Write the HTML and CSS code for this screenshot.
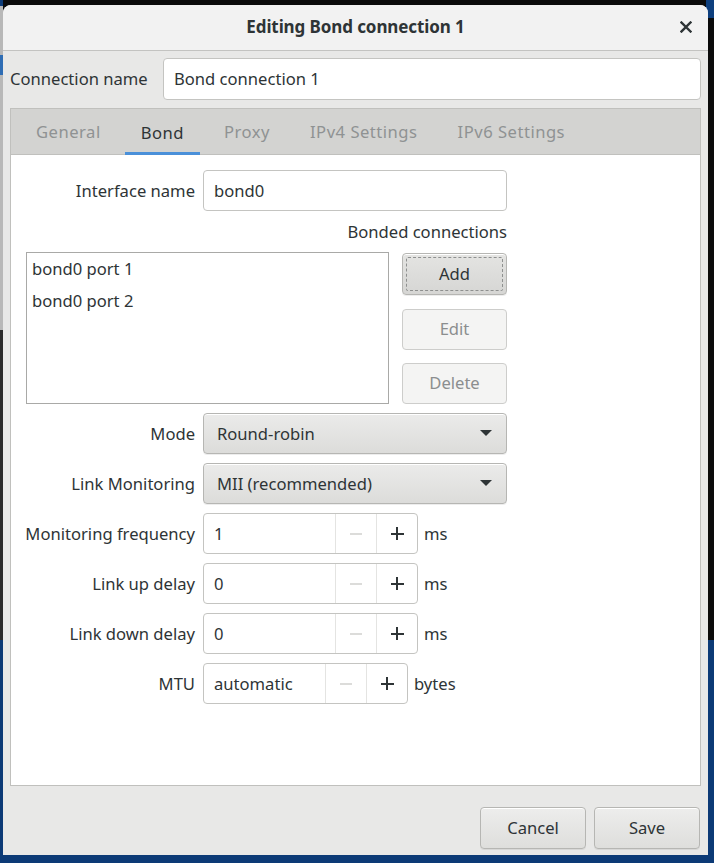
FILE: index.html
```html
<!DOCTYPE html>
<html>
<head>
<meta charset="utf-8">
<link rel="stylesheet" href="styles.css">
</head>
<body>
<div class="screen">
  <div class="dialog">
    <div class="titlebar">
      <div class="title">Editing Bond connection 1</div>
      <button class="close" aria-label="Close">
        <svg width="12" height="12" viewBox="0 0 12 12"><path d="M1.5 1.5 L10.5 10.5 M10.5 1.5 L1.5 10.5" stroke="#2e3436" stroke-width="2.4" stroke-linecap="square"/></svg>
      </button>
    </div>
    <div class="content">
      <div class="conn-row">
        <span class="conn-label">Connection name</span>
        <div class="entry conn-entry">Bond connection 1</div>
      </div>
      <div class="notebook">
        <div class="tabs">
          <div class="tab">General</div>
          <div class="tab active">Bond</div>
          <div class="tab">Proxy</div>
          <div class="tab">IPv4 Settings</div>
          <div class="tab">IPv6 Settings</div>
        </div>
        <div class="page">
          <div class="form">
            <div class="label">Interface name</div>
            <div class="entry">bond0</div>

            <div class="bonded-title">Bonded connections</div>

            <div class="bonded">
              <div class="list">
                <div class="list-row">bond0 port 1</div>
                <div class="list-row">bond0 port 2</div>
              </div>
              <div class="list-buttons">
                <div class="btn focused"><span>Add</span></div>
                <div class="btn disabled"><span>Edit</span></div>
                <div class="btn disabled"><span>Delete</span></div>
              </div>
            </div>

            <div class="label">Mode</div>
            <div class="combo"><span>Round-robin</span><span class="arrow"></span></div>

            <div class="label">Link Monitoring</div>
            <div class="combo"><span>MII (recommended)</span><span class="arrow"></span></div>

            <div class="label">Monitoring frequency</div>
            <div class="spin-row">
              <div class="spin">
                <div class="spin-text">1</div>
                <div class="spin-btn minus"><span class="minus-bar"></span></div>
                <div class="spin-btn plus"><span class="plus-sign"></span></div>
              </div>
              <span class="unit">ms</span>
            </div>

            <div class="label">Link up delay</div>
            <div class="spin-row">
              <div class="spin">
                <div class="spin-text">0</div>
                <div class="spin-btn minus"><span class="minus-bar"></span></div>
                <div class="spin-btn plus"><span class="plus-sign"></span></div>
              </div>
              <span class="unit">ms</span>
            </div>

            <div class="label">Link down delay</div>
            <div class="spin-row">
              <div class="spin">
                <div class="spin-text">0</div>
                <div class="spin-btn minus"><span class="minus-bar"></span></div>
                <div class="spin-btn plus"><span class="plus-sign"></span></div>
              </div>
              <span class="unit">ms</span>
            </div>

            <div class="label">MTU</div>
            <div class="spin-row">
              <div class="spin small">
                <div class="spin-text">automatic</div>
                <div class="spin-btn minus"><span class="minus-bar"></span></div>
                <div class="spin-btn plus"><span class="plus-sign"></span></div>
              </div>
              <span class="unit">bytes</span>
            </div>
          </div>
        </div>
      </div>
      <div class="actions">
        <div class="btn action">Cancel</div>
        <div class="btn action">Save</div>
      </div>
    </div>
  </div>
</div>
</body>
</html>
```

FILE: styles.css
```css
* { box-sizing: border-box; }

html, body {
  margin: 0;
  padding: 0;
}

body {
  width: 714px;
  height: 863px;
  overflow: hidden;
  font-family: "Noto Sans", "DejaVu Sans", sans-serif;
  font-size: 16.6px;
  color: #2e3436;
  background:
    linear-gradient(to bottom, #0e3f7e 0, #0e3f7e 18px, transparent 18px) right top / 8px 100% no-repeat,
    linear-gradient(to bottom, transparent 0, transparent 640px, #0c3a76 640px) right top / 8px 100% no-repeat,
    linear-gradient(to bottom, #0d3c79 0, #0d3c79 6px, #b8b8b8 6px, #b8b8b8 55px, #2f6db4 55px, #2f6db4 75px, #b8b8b8 75px, #b8b8b8 330px, #2a2a2a 330px, #2a2a2a 640px, #0c3a76 640px) left top / 3px 100% no-repeat,
    linear-gradient(to bottom, #0b0b0b 0, #0b0b0b 840px, #0c3a76 840px);
}

.screen {
  padding: 5px 6px 8px 3px;
}

.dialog {
  width: 705px;
  height: 850px;
  background: #e8e8e7;
  border-radius: 8px 8px 0 0;
  display: flex;
  flex-direction: column;
  overflow: hidden;
}

/* Title bar */
.titlebar {
  height: 46px;
  flex: none;
  background: #f2f2f2;
  border-bottom: 1px solid #c3c3c1;
  display: flex;
  align-items: center;
  justify-content: center;
  position: relative;
  padding-bottom: 2px;
}

.title {
  font-weight: bold;
  font-size: 17px;
  color: #2e3436;
  letter-spacing: -0.1px;
}

.close {
  position: absolute;
  right: 16px;
  top: 16px;
  width: 12px;
  height: 12px;
  padding: 0;
  border: 0;
  background: none;
  display: flex;
}

/* Content */
.content {
  flex: 1;
  display: flex;
  flex-direction: column;
  padding: 7px 7px 0 7px;
}

.conn-row {
  display: flex;
  align-items: center;
  gap: 16px;
  height: 42px;
}

.conn-label {
  width: 137px;
  white-space: nowrap;
  padding-bottom: 2px;
}

.entry {
  height: 41px;
  background: #ffffff;
  border: 1px solid #c4c4c1;
  border-radius: 4px;
  padding: 0 10px 1px 10px;
  display: flex;
  align-items: center;
}

.conn-entry {
  flex: 1;
  height: 42px;
}

/* Notebook */
.notebook {
  margin-top: 8px;
  height: 678px;
  border: 1px solid #c0c0bd;
  display: flex;
  flex-direction: column;
  background: #ffffff;
}

.tabs {
  height: 46px;
  flex: none;
  background: #d3d3d1;
  border-bottom: 1px solid #c0c0bd;
  display: flex;
  padding-left: 5px;
}

.tab {
  margin: 0 4px;
  padding: 0 16px;
  display: flex;
  align-items: center;
  color: #8f9293;
  border-bottom: 3px solid transparent;
  padding-top: 3px;
  white-space: nowrap;
  letter-spacing: 0.5px;
}

.tab.active {
  color: #2e3436;
  border-bottom-color: #4a90d9;
  margin-bottom: -1px;
}

.page {
  flex: 1;
  padding: 15px 0 0 15px;
}

.form {
  display: grid;
  grid-template-columns: 169px 304px;
  column-gap: 8px;
  row-gap: 9px;
}

.label {
  text-align: right;
  display: flex;
  align-items: center;
  justify-content: flex-end;
  white-space: nowrap;
  height: 41px;
  padding-bottom: 1px;
}

.bonded-title {
  grid-column: 1 / -1;
  text-align: right;
  height: 23px;
  line-height: 23px;
}

.bonded {
  grid-column: 1 / -1;
  display: flex;
  gap: 13px;
  height: 152px;
}

.list {
  flex: 1;
  border: 1px solid #a9a9a7;
  background: #ffffff;
}

.list-row {
  height: 32px;
  line-height: 32px;
  padding-left: 5px;
}

.list-buttons {
  width: 105px;
  display: flex;
  flex-direction: column;
  justify-content: space-between;
  padding-top: 1px;
}

.btn {
  height: 42px;
  border: 1px solid #b6b6b3;
  border-radius: 4px;
  background: linear-gradient(to bottom, #ededec, #dededc);
  box-shadow: inset 0 1px #ffffff, 0 1px rgba(0, 0, 0, 0.07);
  display: flex;
  align-items: center;
  justify-content: center;
  color: #2e3436;
  position: relative;
  padding-bottom: 2px;
}

.btn.focused {
  background: linear-gradient(to bottom, #e4e4e2, #d6d6d4);
}

.btn.focused::after {
  content: "";
  position: absolute;
  inset: 3px;
  border: 1px dashed #8e908f;
  border-radius: 2px;
}

.btn.disabled {
  background: #f4f4f3;
  border-color: #cdcdcb;
  box-shadow: none;
  color: #8b8e8f;
  height: 41px;
}

.combo {
  height: 41px;
  border: 1px solid #b6b6b3;
  border-radius: 4px;
  background: linear-gradient(to bottom, #ebebea, #dcdcda);
  box-shadow: inset 0 1px #ffffff, 0 1px rgba(0, 0, 0, 0.07);
  display: flex;
  align-items: center;
  justify-content: space-between;
  padding: 0 14px 1px 13px;
}

.arrow {
  width: 0;
  height: 0;
  border-left: 6px solid transparent;
  border-right: 6px solid transparent;
  border-top: 6px solid #2e3436;
}

.spin-row {
  display: flex;
  align-items: center;
  gap: 6px;
}

.spin {
  height: 41px;
  width: 215px;
  border: 1px solid #c4c4c1;
  border-radius: 4px;
  background: #ffffff;
  display: flex;
}

.spin.small {
  width: 205px;
}

.spin-text {
  flex: 1;
  padding: 0 0 1px 10px;
  display: flex;
  align-items: center;
}

.spin-btn {
  width: 41px;
  border-left: 1px solid #e4e4e2;
  display: flex;
  align-items: center;
  justify-content: center;
}

.minus-bar {
  width: 12px;
  height: 2px;
  background: #dcdcda;
}

.plus-sign {
  width: 13px;
  height: 13px;
  background:
    linear-gradient(#2e3436, #2e3436) center / 13px 2px no-repeat,
    linear-gradient(#2e3436, #2e3436) center / 2px 13px no-repeat;
}

.unit {
  color: #2e3436;
  padding-bottom: 1px;
}

/* Bottom actions */
.actions {
  flex: 1;
  display: flex;
  justify-content: flex-end;
  align-items: flex-end;
  gap: 8px;
  padding: 0 1px 6px 0;
}

.btn.action {
  width: 106px;
  height: 42px;
}
```
